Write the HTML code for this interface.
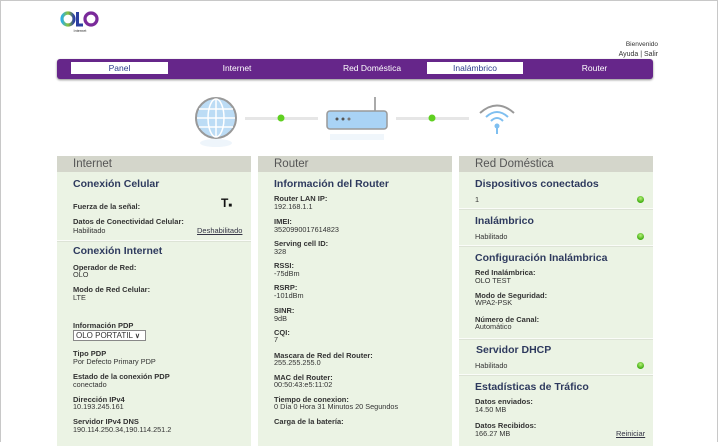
<!DOCTYPE html><html><head><meta charset="utf-8"><style>
*{margin:0;padding:0;box-sizing:border-box}
body{width:718px;height:442px;overflow:hidden;background:#fff;font-family:"Liberation Sans",sans-serif;position:relative}
#frame{position:absolute;left:0;top:0;width:718px;height:442px;border:1px solid #c8c8c8;border-bottom:none}
.a{position:absolute;white-space:nowrap}
.l{font-size:7.5px;font-weight:bold;color:#333;line-height:9px}
.v{font-size:7.3px;color:#333;line-height:9px}
.h{font-size:10.5px;font-weight:bold;color:#2e3a5e;line-height:12px}
.col{position:absolute;top:156px;height:290px;background:#ebf3e4}
.hd{position:absolute;left:0;right:0;top:0;height:16px;background:#d4d6cb;color:#555;font-size:11.5px;line-height:16px;padding-left:16px}
.div{position:absolute;left:0;right:0;height:2px;background:#dde3d6;border-top:1px solid #fafcf8}
.dot{position:absolute;width:7px;height:7px;border-radius:50%;background:radial-gradient(circle at 50% 35%,#b8f07a,#3fae10 70%)}
.nav{position:absolute;left:57px;top:59px;width:596px;height:20px;background:#66268a;border-radius:3px;box-shadow:0 1px 2px #888}
.nav div{position:absolute;top:3px;height:12px;font-size:8.5px;line-height:12px;text-align:center;color:#fff}
.nav .s{background:#fff;color:#2a3a8a}
u{color:#334}
</style></head><body><div id="frame"></div>
<svg class="a" style="left:60px;top:10px" width="42" height="24" viewBox="0 0 42 24">
<defs><linearGradient id="g" x1="0" x2="1"><stop offset="0" stop-color="#2fb0e0"/><stop offset=".5" stop-color="#8ac43a"/><stop offset="1" stop-color="#2b3fa0"/></linearGradient></defs>
<circle cx="8" cy="9" r="6" fill="none" stroke="url(#g)" stroke-width="3.2"/>
<path d="M17.5 2V15H23" fill="none" stroke="#2b3fa0" stroke-width="3"/>
<circle cx="31" cy="9" r="6" fill="none" stroke="#7a2a9a" stroke-width="3.2"/>
<text x="20" y="22" font-size="3.8" text-anchor="middle" fill="#333" font-family="Liberation Sans">Internet</text></svg>
<div class="a v" style="right:60px;top:40px;font-size:6.5px">Bienvenido</div>
<div class="a v" style="right:60px;top:50px;font-size:7px">Ayuda | Salir</div>
<div class="nav">
<div class="s" style="left:14px;width:97px">Panel</div>
<div style="left:140px;width:80px">Internet</div>
<div style="left:255px;width:120px">Red Doméstica</div>
<div class="s" style="left:370px;width:96px">Inalámbrico</div>
<div style="left:495px;width:85px">Router</div></div>
<svg class="a" style="left:190px;top:88px" width="330" height="60" viewBox="190 88 330 60">
<circle cx="216" cy="118" r="20" fill="#bcdcf5" stroke="#999" stroke-width="2"/>
<g stroke="#fff" stroke-width="1.5" fill="none"><ellipse cx="216" cy="118" rx="8" ry="19"/><path d="M216 99V137M197 118H235M199 109H233M199 127H233"/></g>
<ellipse cx="216" cy="143" rx="16" ry="4" fill="#eef5fb"/>
<rect x="245" y="117" width="73" height="3" fill="#e6e6e6"/><rect x="396" y="117" width="73" height="3" fill="#e6e6e6"/>
<circle cx="281" cy="118" r="3.5" fill="#5fd020"/><circle cx="432" cy="118" r="3.5" fill="#5fd020"/>
<rect x="374" y="97" width="2" height="14" fill="#aaa"/>
<rect x="327" y="111" width="60" height="18" rx="3" fill="#a9d3f5" stroke="#999" stroke-width="1.5"/>
<circle cx="337" cy="119" r="1.5" fill="#555"/><circle cx="343" cy="119" r="1.5" fill="#555"/><circle cx="349" cy="119" r="1.5" fill="#777"/>
<rect x="330" y="134" width="54" height="6" fill="#f0f6fb"/>
<path d="M480 113Q497 98 514 113" fill="none" stroke="#999" stroke-width="2"/>
<path d="M486 117Q497 107 508 117" fill="none" stroke="#7fbff0" stroke-width="2"/>
<path d="M491 121Q497 115 503 121" fill="none" stroke="#7fbff0" stroke-width="2"/>
<circle cx="497" cy="126" r="2.5" fill="#7fbff0"/><rect x="496" y="128" width="2" height="6" fill="#7fbff0"/></svg>

<div class="col" style="left:57px;width:194px"><div class="hd">Internet</div><div class="div" style="top:84px"></div></div>
<div class="col" style="left:258px;width:194px"><div class="hd">Router</div></div>
<div class="col" style="left:459px;width:194px"><div class="hd">Red Doméstica</div>
<div class="div" style="top:52px"></div><div class="div" style="top:89px"></div><div class="div" style="top:182px"></div><div class="div" style="top:218px"></div></div>

<div class="a h" style="left:73px;top:178px">Conexión Celular</div>
<div class="a l" style="left:73px;top:202px">Fuerza de la señal:</div>
<div class="a" style="left:221px;top:196px;font-size:12px;font-weight:bold;color:#111">T<span style="font-size:6px">■</span></div>
<div class="a l" style="left:73px;top:217px">Datos de Conectividad Celular:</div>
<div class="a v" style="left:73px;top:226px">Habilitado</div>
<div class="a v" style="left:197px;top:226px;font-size:7.5px"><u>Deshabilitado</u></div>
<div class="a h" style="left:73px;top:245px">Conexión Internet</div>
<div class="a l" style="left:73px;top:263px">Operador de Red:</div><div class="a v" style="left:73px;top:270px">OLO</div>
<div class="a l" style="left:73px;top:285px">Modo de Red Celular:</div><div class="a v" style="left:73px;top:293px">LTE</div>
<div class="a l" style="left:73px;top:321px">Información PDP</div>
<div class="a v" style="left:73px;top:330px;width:73px;height:11px;border:1px solid #888;background:#fff;font-size:8px;line-height:9px;padding-left:2px">OLO PORTATIL <span style="font-size:7px;font-weight:bold">∨</span></div>
<div class="a l" style="left:73px;top:349px">Tipo PDP</div><div class="a v" style="left:73px;top:357px">Por Defecto Primary PDP</div>
<div class="a l" style="left:73px;top:372px">Estado de la conexión PDP</div><div class="a v" style="left:73px;top:380px">conectado</div>
<div class="a l" style="left:73px;top:395px">Dirección IPv4</div><div class="a v" style="left:73px;top:402px">10.193.245.161</div>
<div class="a l" style="left:73px;top:417px">Servidor IPv4 DNS</div><div class="a v" style="left:73px;top:425px">190.114.250.34,190.114.251.2</div>

<div class="a h" style="left:274px;top:178px">Información del Router</div>
<div class="a l" style="left:274px;top:194px">Router LAN IP:</div><div class="a v" style="left:274px;top:202px">192.168.1.1</div>
<div class="a l" style="left:274px;top:217px">IMEI:</div><div class="a v" style="left:274px;top:225px">3520990017614823</div>
<div class="a l" style="left:274px;top:239px">Serving cell ID:</div><div class="a v" style="left:274px;top:247px">328</div>
<div class="a l" style="left:274px;top:261px">RSSI:</div><div class="a v" style="left:274px;top:269px">-75dBm</div>
<div class="a l" style="left:274px;top:283px">RSRP:</div><div class="a v" style="left:274px;top:291px">-101dBm</div>
<div class="a l" style="left:274px;top:306px">SINR:</div><div class="a v" style="left:274px;top:314px">9dB</div>
<div class="a l" style="left:274px;top:328px">CQI:</div><div class="a v" style="left:274px;top:335px">7</div>
<div class="a l" style="left:274px;top:351px">Mascara de Red del Router:</div><div class="a v" style="left:274px;top:358px">255.255.255.0</div>
<div class="a l" style="left:274px;top:373px">MAC del Router:</div><div class="a v" style="left:274px;top:380px">00:50:43:e5:11:02</div>
<div class="a l" style="left:274px;top:395px">Tiempo de conexion:</div><div class="a v" style="left:274px;top:402px">0 Día 0 Hora 31 Minutos 20 Segundos</div>
<div class="a l" style="left:274px;top:417px">Carga de la batería:</div>

<div class="a h" style="left:475px;top:178px">Dispositivos conectados</div>
<div class="a v" style="left:475px;top:195px">1</div><div class="dot" style="left:637px;top:196px"></div>
<div class="a h" style="left:475px;top:215px">Inalámbrico</div>
<div class="a v" style="left:475px;top:232px">Habilitado</div><div class="dot" style="left:637px;top:233px"></div>
<div class="a h" style="left:475px;top:252px">Configuración Inalámbrica</div>
<div class="a l" style="left:475px;top:268px">Red Inalámbrica:</div><div class="a v" style="left:475px;top:276px">OLO TEST</div>
<div class="a l" style="left:475px;top:291px">Modo de Seguridad:</div><div class="a v" style="left:475px;top:298px">WPA2-PSK</div>
<div class="a l" style="left:475px;top:315px">Número de Canal:</div><div class="a v" style="left:475px;top:322px">Automático</div>
<div class="a h" style="left:476px;top:344px">Servidor DHCP</div>
<div class="a v" style="left:475px;top:361px">Habilitado</div><div class="dot" style="left:637px;top:362px"></div>
<div class="a h" style="left:475px;top:381px">Estadísticas de Tráfico</div>
<div class="a l" style="left:475px;top:397px">Datos enviados:</div><div class="a v" style="left:475px;top:405px">14.50 MB</div>
<div class="a l" style="left:475px;top:421px">Datos Recibidos:</div><div class="a v" style="left:475px;top:429px">166.27 MB</div>
<div class="a v" style="left:616px;top:429px;font-size:7.5px"><u>Reiniciar</u></div>
</body></html>
